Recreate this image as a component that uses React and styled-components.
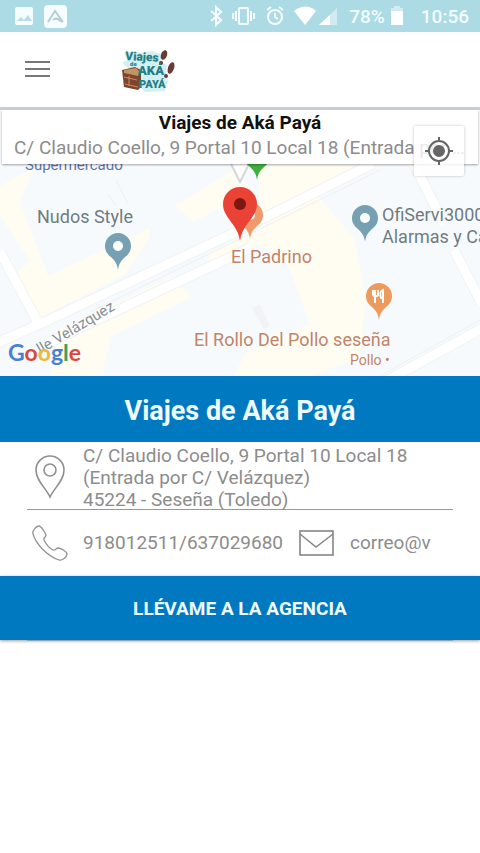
import React from "react";
import styled, { createGlobalStyle } from "styled-components";

const GlobalStyle = createGlobalStyle`
  * {
    box-sizing: border-box;
  }
  body {
    margin: 0;
    background: #fff;
    font-family: Roboto, "Liberation Sans", sans-serif;
    color: #8c8c8c;
  }
`;

const Page = styled.div`
  display: flex;
  flex-direction: column;
  min-height: 100vh;
  overflow-x: hidden;
`;

const StatusBar = styled.div`
  display: flex;
  align-items: center;
  justify-content: space-between;
  height: 32px;
  padding: 0 11px 0 14px;
  background: #acdae5;
  color: #fff;
`;

const StatusGroup = styled.div`
  display: flex;
  align-items: center;
  gap: ${(props) => props.$gap}px;
`;

const StatusText = styled.span`
  font-size: 19px;
  line-height: 32px;
  padding-top: 2px;
  font-weight: 500;
  color: #f4fdff;
`;

const Header = styled.header`
  display: flex;
  align-items: center;
  gap: 70px;
  height: 78px;
  padding: 0 25px 2px;
  border-bottom: 3px solid #c3d1d7;
`;

const MenuButton = styled.button`
  display: flex;
  padding: 0;
  border: none;
  background: none;
  cursor: pointer;
`;

const MapArea = styled.section`
  position: relative;
  height: 266px;
  background: #f7fafc;
  overflow: hidden;
`;

const MapDrawing = styled.svg`
  display: block;
  width: 100%;
  height: 100%;
`;

const MapLabel = styled.span`
  position: absolute;
  left: ${(props) => props.$x}px;
  top: ${(props) => props.$y}px;
  font-size: ${(props) => props.$size || 18}px;
  line-height: 22px;
  color: ${(props) => props.$color};
  white-space: pre;
  text-shadow: 0 0 2px #fff;
`;

const StreetLabel = styled(MapLabel)`
  transform: rotate(-31deg);
  transform-origin: left center;
`;

const MapPin = styled.svg`
  position: absolute;
  left: ${(props) => props.$x}px;
  top: ${(props) => props.$y}px;
`;

const GoogleMark = styled.span`
  position: absolute;
  left: 8px;
  bottom: 11px;
  font-family: Lato, sans-serif;
  font-size: 23px;
  line-height: 26px;
  font-weight: 700;
`;

const Letter = styled.span`
  color: ${(props) => props.$color};
`;

const InfoCard = styled.div`
  position: absolute;
  top: 0;
  left: 2px;
  right: 2px;
  height: 54px;
  padding: 0 12px;
  background: #fff;
  box-shadow: 0 1px 2px rgba(0, 0, 0, 0.35);
`;

const CardTitle = styled.h2`
  margin: 0;
  font-size: 19px;
  line-height: 25px;
  font-weight: 700;
  color: #111;
  text-align: center;
`;

const CardAddress = styled.p`
  margin: 0;
  font-size: 19px;
  line-height: 25px;
  white-space: nowrap;
  overflow: hidden;
  text-overflow: ellipsis;
`;

const LocateButton = styled.button`
  position: absolute;
  top: 16px;
  right: 16px;
  display: flex;
  align-items: center;
  justify-content: center;
  width: 50px;
  height: 50px;
  padding: 0;
  border: none;
  border-radius: 2px;
  background: rgba(255, 255, 255, 0.8);
  box-shadow: 0 0 3px rgba(0, 0, 0, 0.25);
  cursor: pointer;
`;

const AgencyTitle = styled.h1`
  margin: 0;
  padding-top: 5px;
  background: #0079c1;
  color: #eefbff;
  font-size: 27px;
  line-height: 61px;
  font-weight: 700;
  text-align: center;
`;

const Details = styled.div`
  padding: 0 27px;
  font-size: 19px;
  line-height: 22px;
`;

const DetailRow = styled.div`
  display: flex;
  align-items: center;
  height: 66px;
`;

const AddressRow = styled(DetailRow)`
  height: 68px;
  padding-top: 3px;
  border-bottom: 1px solid #999;
`;

const IconSlot = styled.span`
  display: flex;
  flex: none;
  width: ${(props) => props.$width}px;
  padding-left: ${(props) => props.$pad}px;
`;

const Address = styled.address`
  align-self: flex-start;
  font-style: normal;
`;

const ContactLink = styled.a`
  color: inherit;
  text-decoration: none;
  white-space: nowrap;
`;

const GoButton = styled.button`
  height: 64px;
  padding: 0;
  border: none;
  background: #0079c1;
  color: #eefbff;
  font-family: inherit;
  font-size: 19px;
  font-weight: 700;
  box-shadow: 0 1px 3px rgba(0, 0, 0, 0.4);
  cursor: pointer;
`;

const BottomRule = styled.hr`
  width: calc(100% - 54px);
  margin: 0 auto;
  border: none;
  border-top: 1px solid #8fa3b0;
`;

const googleLetters = [
  ["G", "#4a7fd4"],
  ["o", "#d9493f"],
  ["o", "#eab93a"],
  ["g", "#4a7fd4"],
  ["l", "#3f9f5c"],
  ["e", "#d9493f"],
];

const StatusLeft = () => (
  <StatusGroup $gap={10}>
    <svg width="20" height="20" viewBox="0 0 20 20">
      <rect x="1" y="1" width="18" height="18" rx="2" fill="#f6fdff" />
      <path d="M3 15l4-4 3 3 4-5 4 6z" fill="#b9dce4" />
    </svg>
    <svg width="23" height="23" viewBox="0 0 23 23">
      <rect width="23" height="23" rx="4" fill="#f6fdff" />
      <path d="M4 17L11 6l8 11M9 15c3-3 6-1 9 2" fill="none" stroke="#b4cfd3" strokeWidth="2" />
    </svg>
  </StatusGroup>
);

const StatusRight = () => (
  <StatusGroup $gap={17}>
    <StatusGroup $gap={12}>
      <svg width="127" height="22" viewBox="0 0 127 22" fill="none" stroke="#f6fdff" strokeWidth="2">
        <path d="M1 6l10 9-5 5V2l5 5-10 9" />
        <rect x="29" y="3" width="9" height="16" rx="1" />
        <path d="M26 6v10M41 6v10M23 8v6M44 8v6" />
        <circle cx="65" cy="12" r="7" />
        <path d="M65 8v4l3 2M57 5l4-3M69 2l4 3" />
        <path d="M84 6c7-6 16-6 22 0L95 20z" fill="#fff" stroke="none" />
        <path d="M127 3v17h-18z" fill="#d2ebf1" stroke="none" />
        <path d="M120 10v10h-11z" fill="#fff" stroke="none" />
      </svg>
      <StatusGroup $gap={5}>
        <StatusText>78%</StatusText>
        <svg width="14" height="20" viewBox="0 0 14 20">
          <path d="M4 0h6v2h3v4H1V2h3z" fill="#d2ebf1" />
          <path d="M1 5h12v14H1z" fill="#fff" />
        </svg>
      </StatusGroup>
    </StatusGroup>
    <StatusText>10:56</StatusText>
  </StatusGroup>
);

const Logo = () => (
  <svg width="56" height="46" viewBox="0 0 56 46" fontFamily="Roboto, sans-serif" fontWeight="900" fill="#237f86">
    <path d="M4 7l10-2 6 2 12-2 10 3 1 9 4 2-2 11 3 3-3 12-20 1-12-14L8 22l-6-5 5-3z" fill="#d3eff2" />
    <path d="M2 24l13-3 6 3v17l-3 3-14-3z" fill="#7b4630" />
    <path d="M4 24l12-2 3 3-1 5-14-3z" fill="#c49362" />
    <path d="M4 31l13 3M5 38l13 3M9 30v10" stroke="#d18a5a" />
    <ellipse cx="44" cy="9" rx="3" ry="5" transform="rotate(20 44 9)" fill="#6b3a33" />
    <circle cx="41" cy="17" r="2" fill="#6b3a33" />
    <ellipse cx="51" cy="22" rx="3" ry="6" transform="rotate(20 51 22)" fill="#6b3a33" />
    <circle cx="46" cy="30" r="2" fill="#6b3a33" />
    <text x="5" y="14" fontSize="12" transform="rotate(3 5 14)">Viajes</text>
    <text x="10" y="20" fontSize="6">de</text>
    <text x="18" y="29" fontSize="13">AKÁ</text>
    <text x="19" y="42" fontSize="11">PAYÁ</text>
  </svg>
);

const Marker = ({ x, y, color, children }) => (
  <MapPin $x={x} $y={y} width="28" height="38" viewBox="0 0 28 38">
    <path d="M14 37c-1-7-3-9-7-13a13 13 0 1 1 14 0c-4 4-6 6-7 13z" fill={color} />
    {children || <circle cx="14" cy="13" r="5" fill="#fff" />}
  </MapPin>
);

const MapBackground = () => (
  <MapDrawing viewBox="0 0 480 266" preserveAspectRatio="xMidYMid slice">
    <g fill="#fffcf1">
      <path d="M0 76l34-18-14 34 28 74 102-48-2 12-22 34-88 45-22-46 14-12L0 106z" />
      <path d="M175 96l62-38 14 24-58 30z" />
      <path d="M60 220l114-54 17 22-80 38-8 40H50z" />
      <path d="M208 144l50-26 60-32 36 42 12 60-6 60-50 18h-76l12-24 64-28-24-64-30-16-44 26z" />
      <path d="M260 56l100 0-54 26-48 22z" />
    </g>
    <g fill="none" stroke="#f0f3f6" strokeWidth="11">
      <path d="M-10 236L40 214 236 122 372 54M50 232L250 138" />
      <path d="M370 280l120-66M0 142l40 74M454 140l28 54M414 54l30 60" />
    </g>
    <g fill="none" stroke="#fff" strokeWidth="9">
      <path d="M-10 236L40 214 236 122 372 54M50 232L250 138" />
      <path d="M370 280l120-66M0 142l40 74M454 140l28 54M414 54l30 60" />
    </g>
    <g fill="none" stroke="#edf0f2">
      <path d="M90 202L250 124 380 60M380 266l100-56M116 70l12 24M108 84l8 12" />
    </g>
    <path d="M252 198l8-4 10 22-6 4z" fill="#f1f3f6" />
    <path d="M231 54l9 18 9-18" fill="#fff" stroke="#d3d7da" strokeWidth="2" />
  </MapDrawing>
);

const App = () => {
  return (
    <>
      <GlobalStyle />
      <Page>
        <StatusBar>
          <StatusLeft />
          <StatusRight />
        </StatusBar>

        <Header>
          <MenuButton type="button" aria-label="Menú">
            <svg width="25" height="20" viewBox="0 0 25 20" stroke="#777" strokeWidth="2">
              <path d="M0 3h25M0 10h25M0 17h25" />
            </svg>
          </MenuButton>
          <Logo />
        </Header>

        <MapArea>
          <MapBackground />
          <MapLabel $x={25} $y={44} $size={15} $color="#5c74b0">Supermercado</MapLabel>
          <MapLabel $x={37} $y={96} $color="#6d7b84">Nudos Style</MapLabel>
          <MapLabel $x={382} $y={94} $color="#6d7b84">{"OfiServi3000\nAlarmas y Cámaras"}</MapLabel>
          <MapLabel $x={231} $y={136} $color="#c08468">El Padrino</MapLabel>
          <MapLabel $x={194} $y={219} $color="#c08468">El Rollo Del Pollo seseña</MapLabel>
          <MapLabel $x={350} $y={239} $size={14} $color="#c08468">Pollo •</MapLabel>
          <StreetLabel $x={38} $y={229} $size={15} $color="#8a8f94">lle Velázquez</StreetLabel>

          <Marker x={104} y={123} color="#77a0b3" />
          <Marker x={351} y={95} color="#77a0b3" />
          <Marker x={365} y={173} color="#ef9a5d">
            <path d="M8 7v4c0 3 5 3 5 0V7M10 7v13M18 20V7c-3 1-3 5-2 8h2" fill="none" stroke="#fff" strokeWidth="2" />
          </Marker>
          <Marker x={236} y={92} color="#ef9a6a" />
          <Marker x={243} y={33} color="#3eae3c" />
          <MapPin $x={222} $y={76} width="36" height="56" viewBox="0 0 36 56">
            <path d="M18 55C16 38 1 32 1 18a17 17 0 0 1 34 0c0 14-15 20-17 37z" fill="#ea4335" />
            <circle cx="18" cy="18" r="6" fill="#7d1712" />
          </MapPin>

          <GoogleMark>
            {googleLetters.map(([char, color], index) => (
              <Letter key={index} $color={color}>{char}</Letter>
            ))}
          </GoogleMark>

          <InfoCard>
            <CardTitle>Viajes de Aká Payá</CardTitle>
            <CardAddress>C/ Claudio Coello, 9 Portal 10 Local 18 (Entrada por C/ Velázquez)</CardAddress>
          </InfoCard>
          <LocateButton type="button" aria-label="Mi ubicación">
            <svg width="28" height="28" viewBox="0 0 28 28" fill="none" stroke="#666" strokeWidth="2">
              <circle cx="14" cy="14" r="10" />
              <circle cx="14" cy="14" r="5" fill="#666" />
              <path d="M14 0v5M14 23v5M0 14h5M23 14h5" />
            </svg>
          </LocateButton>
        </MapArea>

        <AgencyTitle>Viajes de Aká Payá</AgencyTitle>

        <Details>
          <AddressRow>
            <IconSlot $width={56} $pad={8}>
              <svg width="30" height="44" viewBox="0 0 30 44" fill="none" stroke="#8f8f8f" strokeWidth="1.6">
                <path d="M15 42C11 33 1 26 1 15a14 14 0 0 1 28 0c0 11-10 18-14 27z" />
                <circle cx="15" cy="15" r="6" />
              </svg>
            </IconSlot>
            <Address>
              C/ Claudio Coello, 9 Portal 10 Local 18
              <br />
              (Entrada por C/ Velázquez)
              <br />
              45224 - Seseña (Toledo)
            </Address>
          </AddressRow>
          <DetailRow>
            <IconSlot $width={56} $pad={5}>
              <svg width="36" height="36" viewBox="0 0 36 36" fill="none" stroke="#939393" strokeWidth="1.3">
                <path d="M7 1C4 1 0 6 1 9c3 10 14 22 26 26 3 1 8-3 8-6 0-2-6-6-9-6-2 0-3 3-5 2-4-2-7-6-9-10-1-2 2-3 2-5C13 7 9 1 7 1z" />
              </svg>
            </IconSlot>
            <ContactLink href="tel:918012511">918012511/637029680</ContactLink>
            <IconSlot $width={67} $pad={16}>
              <svg width="35" height="26" viewBox="0 0 35 26" fill="none" stroke="#858585">
                <rect x="1" y="1" width="33" height="24" strokeWidth="1.6" />
                <path d="M1 4l16 13L34 4" strokeWidth="1.4" />
              </svg>
            </IconSlot>
            <ContactLink href="mailto:correo@v">correo@v</ContactLink>
          </DetailRow>
        </Details>

        <GoButton type="button">LLÉVAME A LA AGENCIA</GoButton>
        <BottomRule />
      </Page>
    </>
  );
};

export default App;
